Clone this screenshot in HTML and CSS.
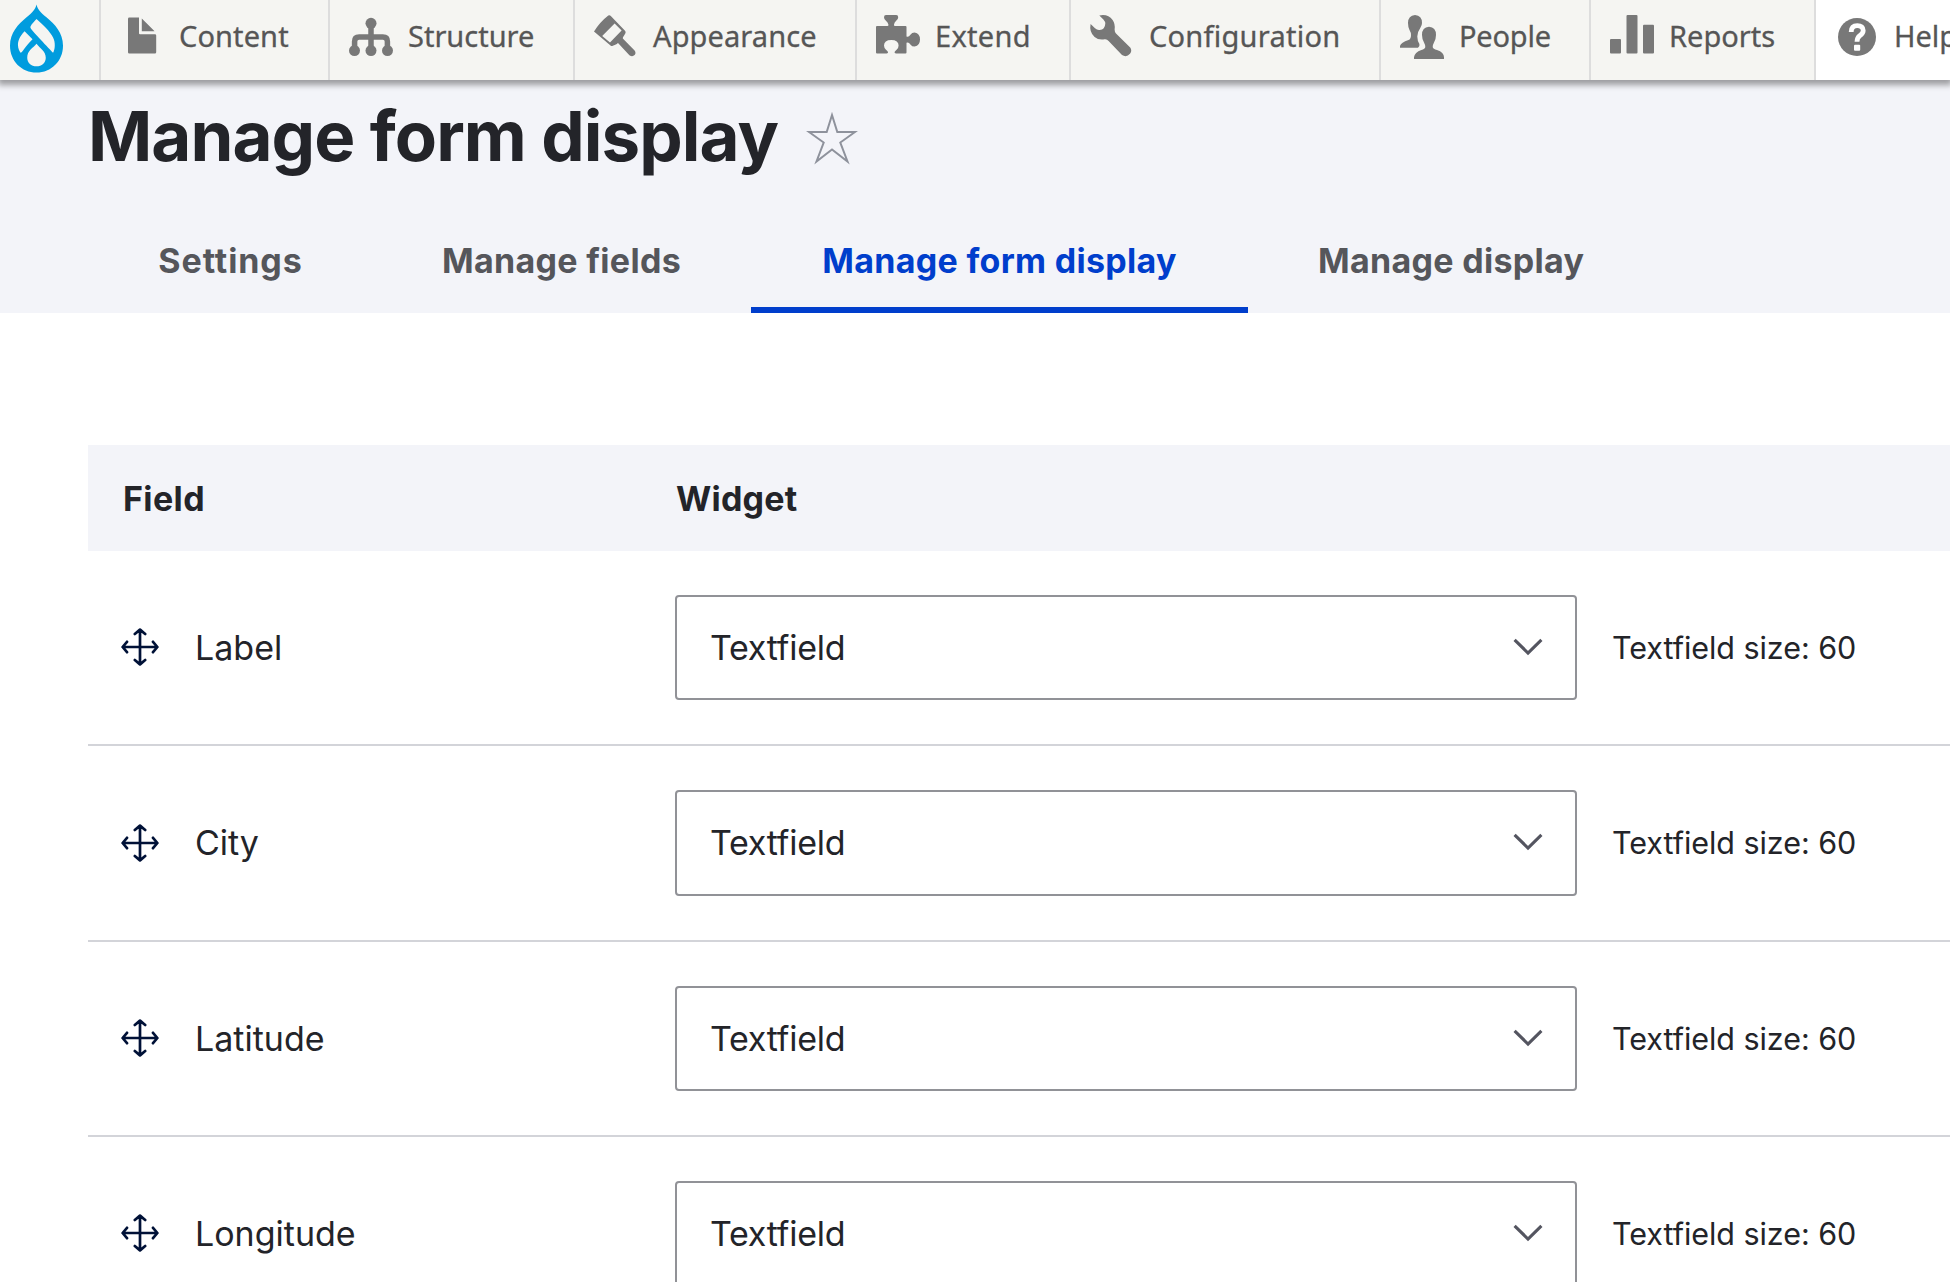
FILE: index.html
```html
<!DOCTYPE html>
<html lang="en">
<head>
<meta charset="utf-8">
<title>Manage form display</title>
<link rel="stylesheet" href="styles.css">
</head>
<body>
<svg class="sprite" aria-hidden="true">
  <symbol id="move" viewBox="0 0 38 38">
    <path d="M19 1.8V36.2M1.8 19H36.2M13.8 6L19 1.6L24.2 6M13.8 32L19 36.4L24.2 32M6 13.8L1.6 19L6 24.2M32 13.8L36.4 19L32 24.2" fill="none" stroke="#001137" stroke-width="2.7" stroke-linecap="round" stroke-linejoin="round"/>
  </symbol>
  <symbol id="chevron" viewBox="0 0 30 18">
    <path d="M1.6 1.8L15 15L28.4 1.8" fill="none" stroke="#545560" stroke-width="3.1"/>
  </symbol>
</svg>

<nav class="toolbar">
  <a class="item home">
    <svg class="logo" viewBox="30 12 160 208">
      <path fill="#009cde" d="M110 13C114 30 124 38 140 52C165 73 190 98 190 138C190 184 155 219 110 219S30 184 30 138C30 98 55 73 80 52C96 38 106 30 110 13Z"/>
      <path fill="#f5f5f2" d="M110 57C98 70 90 78 92 84C94 90 150 148 160 159C166 150 168 128 160 113C150 93 130 75 110 57ZM74 94C58 110 54 125 54 135C54 147 59 155 62 159C67 158 75 141 98 118ZM110 132C100 145 82 152 82 174C82 189 94 200 110 200S138 189 138 174C138 155 122 147 110 132Z"/>
    </svg>
  </a>
  <a class="item content">
    <svg class="icon" viewBox="0 0 44 44"><path d="M9.3 2.6H19V18.3a1 1 0 0 0 1 1H34.9a1.3 1.3 0 0 1 1.3 1.3V37.2a1.3 1.3 0 0 1-1.3 1.3H9.3A1.3 1.3 0 0 1 8 37.2V3.9A1.3 1.3 0 0 1 9.3 2.6ZM21.8 3.6L34.6 16.2H21.8Z"/></svg>
    <span>Content</span>
  </a>
  <a class="item structure">
    <svg class="icon" viewBox="0 0 44 44"><circle cx="22" cy="8.3" r="5.5"/><circle cx="5.5" cy="35.6" r="5.5"/><circle cx="22" cy="35.6" r="5.5"/><circle cx="38.5" cy="35.6" r="5.5"/><path class="line" d="M22 8V35M5.6 35V26.5Q5.6 22 10.1 22H33.9Q38.4 22 38.4 26.5V35"/></svg>
    <span>Structure</span>
  </a>
  <a class="item appearance">
    <svg class="icon" viewBox="0 0 44 44"><path fill-rule="evenodd" d="M0 16.6Q6 7 14.3.6Q15.6-.4 16.8.9L31 15.7Q32.2 17 31.3 18.4L29 22.2L28.800 23.600L40.6 35.4Q42.4 38 40.6 40Q38.4 42.200 35.4 40.200L24 28L22.4 29.2L18.8 30.8Q17.6 31.400 16.5 30.4ZM20.6 8.4L8.2 21L16 27.6L27.6 15.6Z"/></svg>
    <span>Appearance</span>
  </a>
  <a class="item extend">
    <svg class="icon" viewBox="0 0 44 44"><path d="M1 11H11.4Q12.7 11 12.4 9.5Q12 7.6 9.7 5.6Q8 4 8 2.2Q8 0 10 0H20.2Q22.2 0 22.2 2.2Q22.2 4 20.4 5.6Q18.2 7.6 18 9.5Q17.8 11 19 11H29.5Q30.5 11 30.5 12V21.4Q32.6 22.4 34.4 19.8Q36 17.6 38.6 17.6Q44 18.4 44 24.6T38.6 31.6Q36 31.6 34.4 29.4Q32.6 26.8 30.5 27.8V37.6Q30.5 38.6 29.5 38.6H20Q18.2 38.4 18.6 37Q19 36.2 20.6 34.8Q22.6 33 22.6 30.6Q22.6 25 15.3 25T8 30.6Q8 33 10 34.8Q11.6 36.2 12 37Q12.4 38.4 10.6 38.6H1Q0 38.6 0 37.6V12Q0 11 1 11Z"/></svg>
    <span>Extend</span>
  </a>
  <a class="item configuration">
    <svg class="icon" viewBox="0 0 44 44"><path d="M9.3.4Q18-1.4 22.6 5Q25.4 9 24.6 14.4Q24.6 16.8 26 18.4L40.2 32.4Q42.4 35.6 40 38.8Q36.4 42.8 32 40L18.6 26Q17 24 14.6 24.3Q8.6 25.4 4.6 22Q-1 17 .6 9Q2.6 10.8 5 13.2Q7.2 15.2 9.5 14.9Q15 15 15.3 8.6Q15.2 6.6 13.4 4.6Z"/></svg>
    <span>Configuration</span>
  </a>
  <a class="item people">
    <svg class="icon" viewBox="0 0 44 44"><path d="M15 0Q22 .4 22 8Q22 10.4 20.4 12.8Q17.4 17 17.3 21.4Q17.4 26 19.4 29Q20 31.8 18 32.7H0V31Q1 27.4 8.5 25Q11 24.2 11 20Q11 17.5 9.5 15Q8 12 8 8Q8.2.4 15 0ZM29 11.7Q36 12 36 20Q36 24 34 27.5Q32.6 30 32.7 32Q33 34.2 37 35Q44 37.4 44 42.2V44H14V42.2Q14.6 37.4 21.4 35Q25 34.2 25.3 32Q25.4 30 24 27.5Q22 24 22 20Q22 12 29 11.7Z"/></svg>
    <span>People</span>
  </a>
  <a class="item reports">
    <svg class="icon" viewBox="0 0 44 44"><rect x="0" y="24" width="11" height="14.6" rx="1"/><rect x="16.5" y="0" width="11" height="38.6" rx="1"/><rect x="33" y="9.7" width="11" height="28.9" rx="1"/></svg>
    <span>Reports</span>
  </a>
  <a class="item help">
    <svg class="icon" viewBox="0 0 44 44"><circle cx="22" cy="22" r="19"/><path d="M16.2 17Q16.2 10.6 22.3 10.6Q28.2 10.6 28.2 15.5Q28.2 18.2 25 20.5Q22 22.7 22 26.8" fill="none" stroke="#fff" stroke-width="4.8"/><rect x="19" y="29.8" width="6.2" height="6" rx="1" fill="#fff"/></svg>
    <span>Help</span>
  </a>
</nav>

<header class="page-header">
  <div class="title-row">
    <h1>Manage form display</h1>
    <svg class="star" viewBox="0 0 52 54"><path d="M26 4L31.3 21H49L34.3 31.5L41.5 50.5L26 38.5L10.5 50.5L17.7 31.5L3 21H20.7Z"/></svg>
  </div>
  <nav class="tabs">
    <a class="tab settings">Settings</a>
    <a class="tab fields">Manage fields</a>
    <a class="tab active">Manage form display</a>
    <a class="tab display">Manage display</a>
  </nav>
</header>

<main class="fields-table">
  <div class="row head"><span class="field">Field</span><span class="widget">Widget</span></div>
  <div class="row">
    <div class="field"><svg class="move"><use href="#move"/></svg><span>Label</span></div>
    <div class="select"><span>Textfield</span><svg class="chevron"><use href="#chevron"/></svg></div>
    <div class="summary">Textfield size: 60</div>
  </div>
  <div class="row tall">
    <div class="field"><svg class="move"><use href="#move"/></svg><span>City</span></div>
    <div class="select"><span>Textfield</span><svg class="chevron"><use href="#chevron"/></svg></div>
    <div class="summary">Textfield size: 60</div>
  </div>
  <div class="row">
    <div class="field"><svg class="move"><use href="#move"/></svg><span>Latitude</span></div>
    <div class="select"><span>Textfield</span><svg class="chevron"><use href="#chevron"/></svg></div>
    <div class="summary">Textfield size: 60</div>
  </div>
  <div class="row">
    <div class="field"><svg class="move"><use href="#move"/></svg><span>Longitude</span></div>
    <div class="select"><span>Textfield</span><svg class="chevron"><use href="#chevron"/></svg></div>
    <div class="summary">Textfield size: 60</div>
  </div>
</main>
</body>
</html>
```
FILE: styles.css
```css
* { box-sizing: border-box; }
html, body { height: 100%; }
body {
  margin: 0;
  overflow: hidden;
  background: #fff;
  color: #232429;
  font: 400 34px/1.2 Inter, "Liberation Sans", sans-serif;
}
svg { display: block; flex: none; }
.sprite { position: absolute; width: 0; height: 0; }

.toolbar {
  position: relative;
  z-index: 1;
  display: flex;
  height: 80px;
  background: #fff;
  box-shadow: 0 3px 6px 2px rgba(0, 0, 0, .36);
  font: 400 29px/40px "Noto Sans", "Open Sans", sans-serif;
  color: #565656;
  -webkit-text-stroke: .3px #565656;
}
.item {
  display: flex;
  flex: none;
  align-items: flex-start;
  gap: 15px;
  padding: 15px 0 0 19px;
  border-right: 2px solid #ddd;
  background: #f5f5f2;
  white-space: nowrap;
}
.item span { margin-top: 1px; }
.home { width: 101px; padding: 4px 0 0 10px; }
.logo { width: 53px; height: 69px; }
.content { width: 229px; letter-spacing: .1px; }
.structure { width: 245px; }
.appearance { width: 282px; letter-spacing: .1px; }
.extend { width: 214px; letter-spacing: .3px; }
.configuration { width: 310px; letter-spacing: .25px; }
.people { width: 210px; letter-spacing: -.2px; }
.reports { width: 225px; }
.help { width: 134px; border-right: 0; background: #fff; }
.icon { width: 44px; height: 44px; fill: #787878; overflow: visible; }
.icon .line { fill: none; stroke: #787878; stroke-width: 5.5; }

.page-header { height: 233px; padding-left: 88px; background: #f3f4f9; }
.title-row { display: flex; align-items: center; gap: 28px; height: 128px; padding-bottom: 17px; }
h1 { margin: 0; font-size: 69px; line-height: 80px; font-weight: 700; letter-spacing: -.95px; }
.star { width: 52px; height: 54px; margin-top: 5px; fill: none; stroke: #8e929c; stroke-width: 2; }

.tabs { display: flex; height: 105px; }
.tab {
  display: flex;
  align-items: center;
  justify-content: center;
  padding-top: 2px;
  font-weight: 700;
  letter-spacing: .3px;
  color: #55565b;
}
.settings { width: 283px; padding-left: 2px; letter-spacing: .9px; }
.fields { width: 380px; padding-left: 1px; }
.active { width: 497px; color: #003ecc; box-shadow: inset 0 -6px #003ecc; }
.display { padding-left: 70px; }

.fields-table { margin: 132px 0 0 88px; }
.row {
  display: grid;
  grid-template-columns: 587px 902px 1fr;
  align-items: center;
  height: 195px;
  border-bottom: 2px solid #d3d4d9;
}
.tall { height: 196px; }
.head {
  height: 106px;
  padding-top: 2px;
  border: 0;
  background: #f3f4f9;
  font-weight: 700;
}
.head .field { padding-left: 35px; letter-spacing: .4px; }
.head .widget { padding-left: 1px; letter-spacing: .2px; }
.field { display: flex; align-items: center; gap: 36px; padding-left: 33px; }
.row .field span, .select span { padding-top: 1px; }
.move { width: 38px; height: 38px; }
.select {
  display: flex;
  align-items: center;
  justify-content: space-between;
  height: 105px;
  padding: 0 32px 0 33px;
  border: 2px solid #919297;
  border-radius: 4px;
  letter-spacing: -.25px;
}
.tall .select { height: 106px; }
.chevron { width: 30px; height: 18px; margin-bottom: 2px; }
.summary { padding: 1px 0 0 35px; font-size: 30.5px; letter-spacing: -.05px; }
```
